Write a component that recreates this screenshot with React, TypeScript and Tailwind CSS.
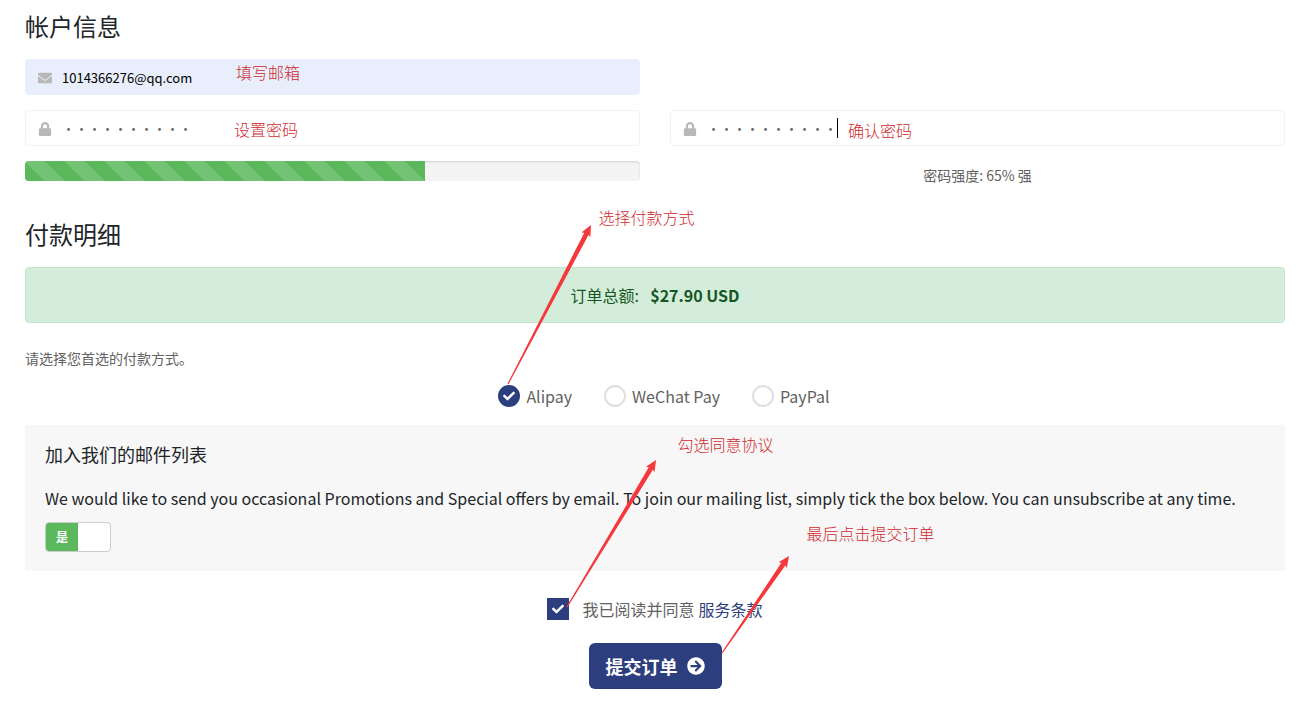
import type { InputHTMLAttributes, ReactNode } from "react";
import { clsx } from "clsx";
import { FaArrowCircleRight, FaCheck, FaEnvelope, FaLock } from "react-icons/fa";

const strength = 65;

const gateways = ["Alipay", "WeChat Pay", "PayPal"];

// Red tutorial note that floats over the form
function Note({ className, children }: { className: string; children: ReactNode }) {
  return (
    <span
      className={clsx(
        "absolute z-10 whitespace-nowrap text-base leading-6 font-light text-[#cf2a2e] pointer-events-none",
        className
      )}
    >
      {children}
    </span>
  );
}

// Tapered arrow, thin at the bottom left and pointing to the top right
function Arrow({ className, width, height }: { className: string; width: number; height: number }) {
  const length = Math.hypot(width, height);
  const angle = (Math.atan2(-height, width) * 180) / Math.PI;
  return (
    <svg
      className={clsx("absolute z-10 overflow-visible pointer-events-none", className)}
      width={width}
      height={height}
      aria-hidden="true"
    >
      <g transform={`translate(0 ${height}) rotate(${angle})`} fill="#f5383c">
        <path
          d={`M0 -0.6 L${length - 10} -2.4 L${length - 11} -5 L${length} 0 L${length - 11} 5 L${length - 10} 2.4 L0 0.6 Z`}
        />
      </g>
    </svg>
  );
}

type FieldProps = InputHTMLAttributes<HTMLInputElement> & {
  icon: ReactNode;
  wrapperClass?: string;
};

function Field({ icon, children, className, wrapperClass, ...props }: FieldProps) {
  return (
    <div className={clsx("relative", wrapperClass)}>
      <label htmlFor={props.id} className="absolute left-[13px] top-0 flex h-9 items-center pt-0.5 text-sm text-[#b8b8b8]">
        {icon}
      </label>
      <input
        className={clsx("block h-9 w-full rounded-sm border pl-9 pr-3 text-[13px] outline-none", className)}
        {...props}
      />
      {children}
    </div>
  );
}

function SectionTitle({ children }: { children: ReactNode }) {
  return <h2 className="text-2xl leading-8 text-[#212529]">{children}</h2>;
}

export default function App() {
  return (
    <form
      className="bg-white pl-[25px] pr-5 pt-2.5 pb-3 font-['Noto_Sans_CJK_SC',sans-serif] text-base text-[#626262]"
      onSubmit={(e) => e.preventDefault()}
    >
      <SectionTitle>帐户信息</SectionTitle>
      <div className="mt-[17px] grid grid-cols-2 gap-x-[30px] gap-y-[15px]">
        <Field
          id="email"
          type="email"
          aria-label="电子邮箱"
          icon={<FaEnvelope />}
          defaultValue="1014366276@qq.com"
          className="border-[#e8eefb] bg-[#e8eefb] text-black"
        >
          <Note className="left-[211px] top-px">填写邮箱</Note>
        </Field>
        <Field
          id="password"
          type="password"
          aria-label="密码"
          icon={<FaLock />}
          defaultValue="abcdefghij"
          wrapperClass="col-start-1"
          className="border-[#f2f2f2] text-[#666]"
        >
          <Note className="left-[209px] top-[7px]">设置密码</Note>
        </Field>
        <Field
          id="confirm"
          type="password"
          aria-label="确认密码"
          icon={<FaLock />}
          defaultValue="abcdefghij"
          className="border-[#f2f2f2] text-[#666]"
        >
          <span className="absolute left-[167px] top-2 h-5 w-px bg-black" />
          <Note className="left-[178px] top-2">确认密码</Note>
        </Field>
        <div className="h-5 overflow-hidden rounded-sm bg-[#f4f4f4] shadow-[inset_0_1px_2px_rgba(0,0,0,0.15)]">
          <div
            className="h-full bg-[#5cb85c] bg-[linear-gradient(45deg,rgba(255,255,255,0.15)_25%,transparent_25%,transparent_50%,rgba(255,255,255,0.15)_50%,rgba(255,255,255,0.15)_75%,transparent_75%,transparent)] bg-size-[40px_40px]"
            style={{ width: `${strength}%` }}
          />
        </div>
        <p className="pt-1 text-center text-sm leading-5">密码强度: {strength}% 强</p>
      </div>

      <div className="mt-[33px]">
        <SectionTitle>付款明细</SectionTitle>
      </div>
      <div className="mt-[17px] rounded-sm border border-[#c3e6cb] bg-[#d4edda] py-[15px] text-center leading-6 text-[#155724]">
        订单总额: &nbsp;<strong className="ml-1">$27.90 USD</strong>
      </div>

      <p className="mt-[25px] text-sm leading-5">请选择您首选的付款方式。</p>
      <div className="mt-4 flex justify-center gap-8 pl-[18px]">
        {gateways.map((name, i) => (
          <label key={name} className="relative flex items-center gap-1.5 leading-6">
            <input
              type="radio"
              name="gateway"
              defaultChecked={i === 0}
              className="peer size-[22px] appearance-none rounded-full border-2 border-[#dfdfdf] bg-white checked:border-[#2c3e7e] checked:bg-[#2c3e7e]"
            />
            <FaCheck className="absolute left-[5px] hidden size-3 text-white peer-checked:block" />
            {name}
            {i === 0 && (
              <>
                <Arrow className="bottom-6 left-2.5" width={83} height={159} />
                <Note className="bottom-[179px] left-[100px]">选择付款方式</Note>
              </>
            )}
          </label>
        ))}
      </div>

      <section className="mt-[17px] bg-[#f7f7f7] px-5 py-[19px] text-[#212529]">
        <h3 className="text-lg leading-5">加入我们的邮件列表</h3>
        <p className="mt-[22px] leading-6">
          We would like to send you occasional Promotions and Special offers by email. To join our mailing list, simply
          tick the box below. You can unsubscribe at any time.
        </p>
        <label className="relative mt-3 flex h-[30px] w-[66px] overflow-hidden rounded-sm border border-[#ccc] bg-white">
          <input type="checkbox" defaultChecked className="absolute inset-0 opacity-0" />
          <span className="flex w-1/2 items-center justify-center bg-[#5cb85c] text-xs font-bold text-white">是</span>
        </label>
      </section>

      <div className="mt-[26px] flex items-center justify-center gap-1">
        <label className="relative flex items-center gap-[13px] leading-6">
          <input
            type="checkbox"
            defaultChecked
            className="peer size-[22px] appearance-none border-2 border-[#dfdfdf] bg-white checked:border-[#2c3e7e] checked:bg-[#2c3e7e]"
          />
          <FaCheck className="absolute left-[5px] hidden size-3 text-white peer-checked:block" />
          我已阅读并同意
          <Arrow className="bottom-3.5 left-5" width={89} height={147} />
          <Note className="bottom-[165px] left-[130px]">勾选同意协议</Note>
        </label>
        <a href="#terms" className="leading-6 text-[#2c3e7e]">
          服务条款
        </a>
      </div>

      <div className="mt-[22px] flex justify-center">
        <button
          type="submit"
          className="relative flex h-[46px] items-center gap-[9px] rounded-md bg-[#2c3e7e] px-[17px] text-lg font-bold text-white"
        >
          提交订单
          <FaArrowCircleRight />
          <Arrow className="bottom-9 left-[133px]" width={67} height={97} />
          <Note className="bottom-36 left-[218px]">最后点击提交订单</Note>
        </button>
      </div>
    </form>
  );
}
